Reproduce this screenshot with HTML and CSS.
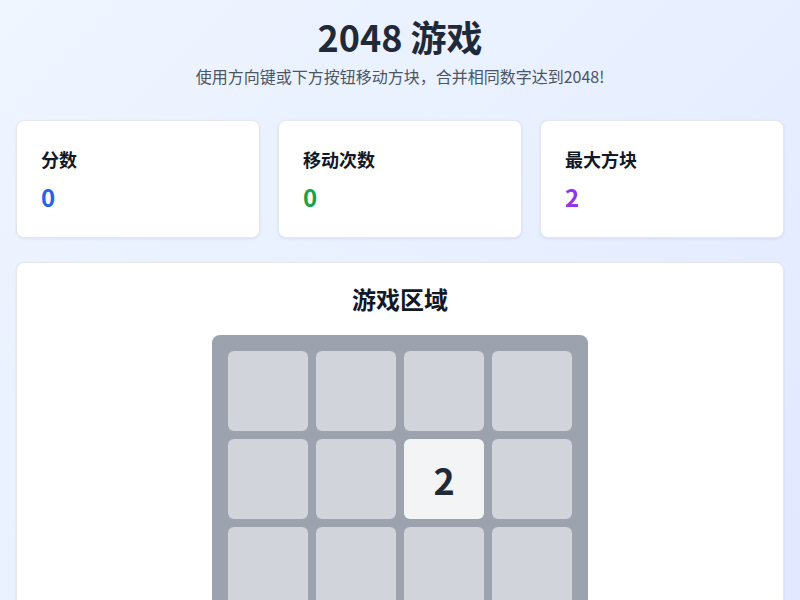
FILE: index.html
```html
<!DOCTYPE html>
<html lang="zh-CN">
<head>
  <meta charset="UTF-8" />
  <meta name="viewport" content="width=device-width, initial-scale=1.0" />
  <title>2048 游戏</title>
  <link rel="stylesheet" href="styles.css">
</head>
<body>
  <div class="app">
    <header class="header">
      <h1>2048 游戏</h1>
      <p>使用方向键或下方按钮移动方块，合并相同数字达到2048!</p>
    </header>

    <div class="stats">
      <div class="card stat">
        <h2>分数</h2>
        <div class="value blue">0</div>
      </div>
      <div class="card stat">
        <h2>移动次数</h2>
        <div class="value green">0</div>
      </div>
      <div class="card stat">
        <h2>最大方块</h2>
        <div class="value purple">2</div>
      </div>
    </div>

    <div class="card game">
      <h2>游戏区域</h2>
      <div class="board">
        <div class="tile"></div>
        <div class="tile"></div>
        <div class="tile"></div>
        <div class="tile"></div>
        <div class="tile"></div>
        <div class="tile"></div>
        <div class="tile t2">2</div>
        <div class="tile"></div>
        <div class="tile"></div>
        <div class="tile"></div>
        <div class="tile"></div>
        <div class="tile"></div>
        <div class="tile"></div>
        <div class="tile"></div>
        <div class="tile"></div>
        <div class="tile"></div>
      </div>
    </div>
  </div>
</body>
</html>
```

FILE: styles.css
```css
* {
  box-sizing: border-box;
  margin: 0;
  padding: 0;
}
body {
  font-family: "Noto Sans CJK SC", "Noto Sans", sans-serif;
  background: linear-gradient(135deg, #eff6ff, #e0e7ff);
  min-height: 100vh;
  color: #1f2937;
}
.app {
  padding: 16px;
}
.header {
  text-align: center;
  margin-bottom: 32px;
}
.header h1 {
  font-size: 36px;
  line-height: 40px;
  font-weight: 700;
  color: #1f2937;
}
.header p {
  margin-top: 8px;
  font-size: 16px;
  line-height: 24px;
  color: #4b5563;
}
.stats {
  display: grid;
  grid-template-columns: repeat(3, 1fr);
  gap: 18px;
  margin-bottom: 24px;
}
.card {
  background: #fff;
  border: 1px solid #e5e7eb;
  border-radius: 8px;
  box-shadow: 0 1px 3px rgba(0, 0, 0, 0.08);
}
.stat {
  padding: 24px;
}
.stat h2 {
  font-size: 18px;
  line-height: 28px;
  font-weight: 700;
  color: #111827;
}
.value {
  margin-top: 8px;
  font-size: 24px;
  line-height: 32px;
  font-weight: 700;
}
.blue { color: #2563eb; }
.green { color: #16a34a; }
.purple { color: #9333ea; }
.game {
  padding: 20px 24px 24px;
  min-height: 400px;
}
.game h2 {
  text-align: center;
  font-size: 24px;
  line-height: 32px;
  font-weight: 700;
  color: #111827;
  margin-bottom: 20px;
}
.board {
  width: 376px;
  margin: 0 auto;
  padding: 16px;
  background: #9ca3af;
  border-radius: 8px;
  display: grid;
  grid-template-columns: repeat(4, 80px);
  grid-auto-rows: 80px;
  gap: 8px;
}
.tile {
  background: #d1d5db;
  border-radius: 6px;
  display: flex;
  align-items: center;
  justify-content: center;
  font-size: 36px;
  font-weight: 700;
  color: #1f2937;
}
.t2 {
  background: #f3f4f6;
}
```
